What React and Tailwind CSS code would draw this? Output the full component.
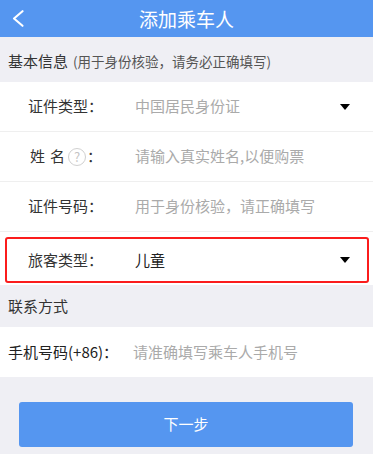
const Caret = () => (
  <svg width="10" height="6" viewBox="0 0 10 6" className="shrink-0">
    <polygon points="0,0 10,0 5,6" fill="#000" />
  </svg>
);

export default function App() {
  return (
    <div className="w-[373px] h-[454px] bg-[#efeff4] overflow-hidden font-['Noto_Sans_CJK_SC',sans-serif] text-[#333]">
      {/* Header */}
      <div className="h-[37px] bg-[#5596f0] grid grid-cols-[50px_1fr_50px] items-center">
        <div className="flex items-center pl-[12px]">
          <svg width="12" height="17" viewBox="0 0 12 17">
            <polyline points="10.5,1.2 2,8.5 10.5,15.8" fill="none" stroke="#fff" strokeWidth="2.1" strokeLinecap="round" strokeLinejoin="round" />
          </svg>
        </div>
        <div className="text-center text-white text-[19px] leading-none">添加乘车人</div>
        <div />
      </div>

      {/* Section header */}
      <div className="h-[45px] flex items-center pl-[8px] pt-[3px]">
        <span className="text-[15px] text-[#333]">基本信息</span>
        <span className="ml-[5px] text-[13.5px] text-[#555]">(用于身份核验，请务必正确填写)</span>
      </div>

      {/* Rows */}
      <div className="bg-white">
        <div className="h-[50px] border-b border-[#efefef] flex items-center pl-[28px] pr-[23px]">
          <div className="w-[107px] text-[15px] text-[#333]">证件类型：</div>
          <div className="flex-1 text-[15px] text-[#aaa]">中国居民身份证</div>
          <Caret />
        </div>
        <div className="h-[50px] border-b border-[#efefef] flex items-center pl-[28px] pr-[23px]">
          <div className="w-[107px] flex items-center text-[15px] text-[#333] pl-[2px]">
            <span>姓</span>
            <span className="ml-[5px]">名</span>
            <span className="ml-[3px] w-[18px] h-[18px] rounded-full border border-[#d0d0d0] text-[#c4c4c4] text-[13px] leading-none flex items-center justify-center">?</span>
            <span className="ml-[1px]">：</span>
          </div>
          <div className="flex-1 text-[15px] text-[#aaa]">请输入真实姓名,以便购票</div>
        </div>
        <div className="h-[50px] border-b border-[#efefef] flex items-center pl-[28px] pr-[23px]">
          <div className="w-[107px] text-[15px] text-[#333]">证件号码：</div>
          <div className="flex-1 text-[15px] text-[#aaa]">用于身份核验，请正确填写</div>
        </div>
        <div className="h-[53px] pt-[5px] pb-[2px] pl-[5px] pr-[4px]">
          <div className="h-full border-2 border-[#fb1c1c] rounded-[3px] flex items-center pl-[21px] pr-[17px]">
            <div className="w-[107px] text-[15px] text-[#333]">旅客类型：</div>
            <div className="flex-1 text-[15px] text-[#222]">儿童</div>
            <Caret />
          </div>
        </div>
      </div>

      {/* Contact section */}
      <div className="h-[42px] flex items-center pl-[8px]">
        <span className="text-[15px] text-[#333]">联系方式</span>
      </div>
      <div className="bg-white h-[50px] flex items-center pl-[8px]">
        <div className="w-[125px] text-[15px] text-[#222]">手机号码(+86)：</div>
        <div className="flex-1 text-[15px] text-[#aaa]">请准确填写乘车人手机号</div>
      </div>

      {/* Button */}
      <div className="pt-[25px] pl-[19px] pr-[20px]">
        <button className="w-full h-[45px] bg-[#5596f0] rounded-[3px] text-white text-[15px] flex items-center justify-center">
          下一步
        </button>
      </div>
    </div>
  );
}
